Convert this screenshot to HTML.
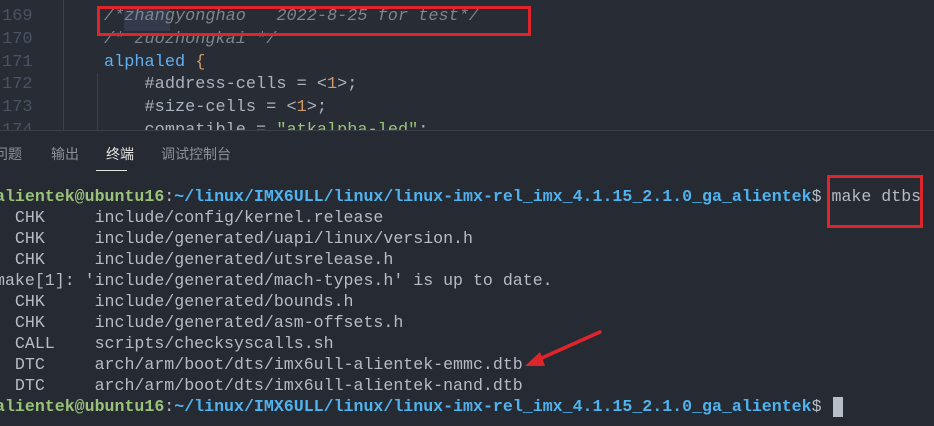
<!DOCTYPE html>
<html><head><meta charset="utf-8"><style>
html,body{margin:0;padding:0;width:934px;height:425px;overflow:hidden;background:#282c34;}
.ed{position:absolute;left:0;top:0;width:934px;height:130px;background:#282c34;overflow:hidden;}
.pn{position:absolute;left:0;top:130px;width:934px;height:295px;background:#262a32;border-top:1px solid #3a3f4a;}
.mono{font-family:"Liberation Mono","DejaVu Sans Mono",monospace;font-size:16.6px;white-space:pre;position:absolute;}
.ln{color:#4b5263;left:2px;font-size:17px;}
.code{left:104px;color:#abb2bf;font-size:16.9px;}
.cm{color:#7f848e;font-style:italic;}
.kw{color:#61afef;}
.or{color:#d19a66;}
.st{color:#98c379;}
.t{left:-5px;color:#b6bcc6;}
.g{color:#98c379;font-weight:bold;}
.b{color:#4fb3ef;font-weight:bold;}
.tab{position:absolute;top:144px;font-family:"Liberation Sans","Noto Sans CJK SC",sans-serif;font-size:14px;color:#8b919c;}
</style></head><body>
<div class="ed">
<div style="position:absolute;left:63px;top:0;width:1px;height:130px;background:#3b404a"></div>
<div style="position:absolute;left:97px;top:73px;width:1px;height:57px;background:#3b404a"></div>
<div class="mono ln" style="top:7px">169</div>
<div class="mono ln" style="top:30px">170</div>
<div class="mono ln" style="top:53px">171</div>
<div class="mono ln" style="top:75px">172</div>
<div class="mono ln" style="top:98px">173</div>
<div class="mono ln" style="top:121px">174</div>
<div style="position:absolute;left:124px;top:7px;width:46px;height:24px;background:#323a4c"></div>
<div class="mono code cm" style="top:7px">/*zhangyonghao   2022-8-25 for test*/</div>
<div class="mono code cm" style="top:30px">/* zuozhongkai */</div>
<div class="mono code" style="top:53px"><span class="kw">alphaled</span> <span class="or">{</span></div>
<div class="mono code" style="top:75px">    #address-cells = &lt;<span class="or">1</span>&gt;;</div>
<div class="mono code" style="top:98px">    #size-cells = &lt;<span class="or">1</span>&gt;;</div>
<div class="mono code" style="top:121px">    compatible = <span class="st">"atkalpha-led"</span>;</div>
<div style="position:absolute;left:97px;top:6px;width:428px;height:24px;border:3px solid #e0242b"></div>
</div>
<div class="pn"></div>
<div class="tab" style="left:-6px">问题</div>
<div class="tab" style="left:51px">输出</div>
<div class="tab" style="left:106px;color:#e6e6e6">终端</div>
<div class="tab" style="left:161px">调试控制台</div>
<div style="position:absolute;left:96px;top:170px;width:31px;height:1px;background:#e6e6e6"></div>
<div class="mono t" style="top:187px"><span class="g">alientek@ubuntu16</span>:<span class="b">~/linux/IMX6ULL/linux/linux-imx-rel_imx_4.1.15_2.1.0_ga_alientek</span>$ make dtbs</div>
<div class="mono t" style="top:208px">  CHK     include/config/kernel.release</div>
<div class="mono t" style="top:229px">  CHK     include/generated/uapi/linux/version.h</div>
<div class="mono t" style="top:250px">  CHK     include/generated/utsrelease.h</div>
<div class="mono t" style="top:271px">make[1]: 'include/generated/mach-types.h' is up to date.</div>
<div class="mono t" style="top:292px">  CHK     include/generated/bounds.h</div>
<div class="mono t" style="top:313px">  CHK     include/generated/asm-offsets.h</div>
<div class="mono t" style="top:334px">  CALL    scripts/checksyscalls.sh</div>
<div class="mono t" style="top:355px">  DTC     arch/arm/boot/dts/imx6ull-alientek-emmc.dtb</div>
<div class="mono t" style="top:376px">  DTC     arch/arm/boot/dts/imx6ull-alientek-nand.dtb</div>
<div class="mono t" style="top:397px"><span class="g">alientek@ubuntu16</span>:<span class="b">~/linux/IMX6ULL/linux/linux-imx-rel_imx_4.1.15_2.1.0_ga_alientek</span>$ </div>
<div style="position:absolute;left:833px;top:397px;width:10px;height:20px;background:#b8bec8"></div>
<div style="position:absolute;left:827px;top:175px;width:90px;height:47px;border:3px solid #e0242b"></div>
<svg style="position:absolute;left:0;top:0" width="934" height="425">
<line x1="600" y1="332" x2="535" y2="361" stroke="#e0242b" stroke-width="3.5" stroke-linecap="round"/>
<polygon points="525,366 540,352 545,366" fill="#e0242b"/>
</svg>
</body></html>
